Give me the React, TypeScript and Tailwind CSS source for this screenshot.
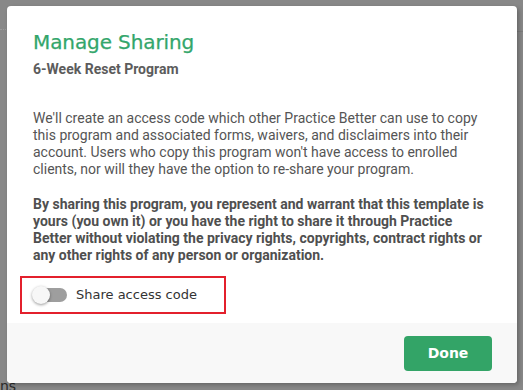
import React from "react";

export default function App() {
  return (
    <div className="relative w-[523px] h-[390px] overflow-hidden bg-[#888888]" style={{ fontFamily: "Roboto, sans-serif" }}>
      {/* faint page content behind the overlay */}
      <div className="absolute left-0 top-[29px] w-[6px] border-t border-dotted border-[#9a9a9a]" />
      <div className="absolute right-0 top-[31px] w-[6px] border-t border-[#7c7c7c]" />
      <div className="absolute left-0 top-[378px] text-[14px] leading-[16px] text-[#2a2a2a]" style={{ fontFamily: "'DejaVu Sans', sans-serif" }}>ns</div>

      <div className="relative pl-[7px] pt-[6px]">
        <div className="w-[510px] h-[377px] bg-white rounded-[4px] shadow-[2px_2px_4px_rgba(0,0,0,0.25)] flex flex-col overflow-hidden">
          <div className="flex-1 pl-[26px] pr-[24px] pt-[24px]">
            <h2
              className="text-[20px] leading-[24px] font-medium text-[#33a66b]"
              style={{ fontFamily: "'DejaVu Sans', sans-serif", letterSpacing: "-0.1px", WebkitTextStroke: "0.25px #33a66b" }}
            >
              Manage Sharing
            </h2>
            <div className="mt-[7px] text-[14px] leading-[16px] font-bold text-[#5c5c5c]">6-Week Reset Program</div>
            <p className="mt-[33px] text-[14px] leading-[17px] text-[#555555]">
              We'll create an access code which other Practice Better can use to copy this program and associated forms, waivers, and disclaimers into their account. Users who copy this program won't have access to enrolled clients, nor will they have the option to re-share your program.
            </p>
            <p className="mt-[18px] text-[14px] leading-[17px] font-bold text-[#4f4f4f]">
              By sharing this program, you represent and warrant that this template is yours (you own it) or you have the right to share it through Practice Better without violating the privacy rights, copyrights, contract rights or any other rights of any person or organization.
            </p>
            <div className="mt-[12px] ml-[-13px] w-[206px] h-[38px] border-2 border-[#e3202c] flex items-center pl-[10px]">
              <div className="relative w-[36px] h-[20px] flex items-center">
                <div className="ml-[5px] w-[30px] h-[14px] rounded-full bg-[#9e9e9e]" />
                <div className="absolute left-0 top-[1px] w-[18px] h-[18px] rounded-full bg-[#f7f7f7] shadow-[0_1px_3px_rgba(0,0,0,0.4)]" />
              </div>
              <span
                className="ml-[8px] text-[13px] font-medium text-[#333333]"
                style={{ fontFamily: "'DejaVu Sans', sans-serif" }}
              >
                Share access code
              </span>
            </div>
          </div>
          <div className="h-[60px] bg-[#f8f8f8] flex items-center justify-end pr-[25px]">
            <button
              className="w-[88px] h-[35px] rounded-[4px] bg-[#33a467] text-white text-[14px] font-semibold"
              style={{ fontFamily: "'DejaVu Sans', sans-serif" }}
            >
              Done
            </button>
          </div>
        </div>
      </div>
    </div>
  );
}
